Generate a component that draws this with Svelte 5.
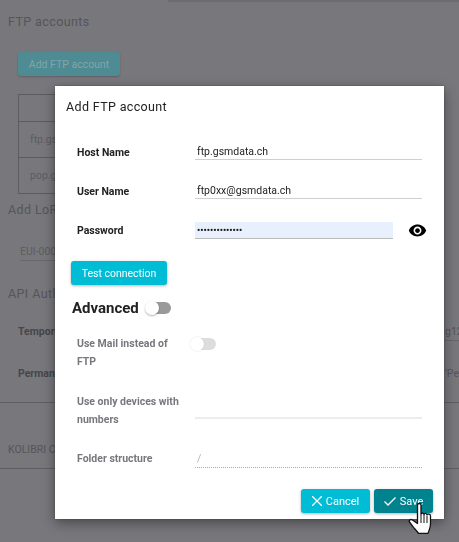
<script>
  let advanced = $state(false);
</script>

<div class="page">
  <div class="topstrip"></div>
  <h2 class="h first">FTP accounts</h2>
  <button class="addbtn">Add FTP account</button>
  <div class="table">
    <div class="tr head"></div>
    <div class="tr">ftp.gsmdata.ch</div>
    <div class="tr">pop.gsmdata.ch</div>
  </div>
  <h2 class="h lora">Add LoRa device</h2>
  <div class="eui">EUI-0000</div>
  <h2 class="h api">API Authentication</h2>
  <div class="keyrow temp"><b>Temporary key</b><span>g12</span></div>
  <div class="keyrow perm"><b>Permanent key</b><span>'Pe</span></div>
  <div class="rule r0"></div>
  <div class="rule r1"></div>
  <div class="kolibri">KOLIBRI Cloud</div>
  <div class="rule r2"></div>
</div>

<div class="dialog">
  <div class="title">Add FTP account</div>

  <div class="formrow host">
    <label for="host">Host Name</label>
    <input id="host" value="ftp.gsmdata.ch" />
  </div>
  <div class="formrow user">
    <label for="user">User Name</label>
    <input id="user" value="ftp0xx@gsmdata.ch" />
  </div>
  <div class="formrow pass">
    <label for="pw">Password</label>
    <input id="pw" class="filled" type="password" value="aaaaaaaaaaaaaa" />
    <svg class="eye" viewBox="0 0 24 24" width="19" height="19"><path d="M12 4.500C7 4.500 2.730 7.610 1 12c1.730 4.390 6 7.500 11 7.500s9.270-3.110 11-7.500c-1.730-4.390-6-7.500-11-7.500zM12 17c-2.760 0-5-2.240-5-5s2.240-5 5-5 5 2.240 5 5-2.240 5-5 5zm0-8c-1.660 0-3 1.340-3 3s1.340 3 3 3 3-1.340 3-3-1.340-3-3-3z"/></svg>
  </div>

  <button class="test">Test connection</button>

  <div class="advanced">
    <span>Advanced</span>
    <div class="toggle dark"><i></i></div>
  </div>

  <div class="formrow mail muted">
    <div class="lbl">Use Mail instead of FTP</div>
    <div class="toggle light"><i></i></div>
  </div>
  <div class="formrow only muted">
    <div class="lbl">Use only devices with numbers</div>
    <div class="line solid"></div>
  </div>
  <div class="formrow folder muted">
    <div class="lbl">Folder structure</div>
    <div class="line dotted">/</div>
  </div>

  <div class="actions">
    <button class="act cancel">
      <svg viewBox="0 0 10 10" width="10" height="10"><path d="M0 0l10 10M10 0L0 10" stroke="#fff" stroke-width="1.300" fill="none"/></svg>
      Cancel
    </button>
    <button class="act save">
      <svg viewBox="0 0 12 9" width="12" height="9"><path d="M.5 4.500l3.500 3.500 7.500-7.500" stroke="#fff" stroke-width="1.300" fill="none"/></svg>
      Save
    </button>
  </div>
</div>

<svg class="hand" viewBox="0 0 26 34" width="26" height="34">
  <path d="M9.500 3c0-2 3.500-2 3.500 0v9.500c.3-2 3-2 3 .2.400-1.800 3-1.600 3 .4.600-1.500 3.500-1.200 3.500.8v8c0 4-1.500 6-2.500 9.500H10.500c-1-2-3-3.500-5-6L1.500 20c-1-1.500 1-3.200 2.500-2.200l5.500 3.700z" fill="#fff" stroke="#111" stroke-width="1.300" stroke-linejoin="round"/>
  <path d="M13 13v8M16 13v8M19 14v7" stroke="#111" stroke-width="1" fill="none"/>
</svg>

<style>
  :global(body) {
    margin: 0;
    background: #78777c;
    font-family: Roboto, "Liberation Sans", sans-serif;
    overflow: hidden;
  }
  .page {
    position: relative;
    width: 459px;
    height: 542px;
    overflow: hidden;
    color: #55555a;
  }
  .page > * { position: absolute; }
  .topstrip { left: 168px; right: 0; top: 0; height: 2px; background: #6c6b70; }
  .h {
    margin: 0;
    left: 8px;
    font-size: 12.500px;
    font-weight: 400;
    letter-spacing: 0.4px;
    line-height: 18px;
    color: #55555a;
  }
  .first { top: 13px; }
  .lora { top: 201px; }
  .api { top: 285px; }
  .addbtn {
    left: 18px;
    top: 52px;
    width: 102px;
    height: 24px;
    border: 0;
    border-radius: 3px;
    background: #4f8b92;
    color: #80a6ab;
    font: 400 10.500px Roboto, sans-serif;
    padding: 0;
    box-shadow: 0 1px 2px rgba(0,0,0,.2);
  }
  .table { left: 18px; top: 94px; width: 200px; border: 1px solid #5c5c60; }
  .tr {
    height: 35px;
    line-height: 35px;
    padding-left: 11px;
    font-size: 10.500px;
    border-top: 1px solid #5c5c60;
    color: #5c5c60;
  }
  .tr.head { height: 26px; border-top: 0; }
  .eui {
    left: 20px;
    top: 244px;
    width: 200px;
    height: 16px;
    font-size: 10.500px;
    line-height: 16px;
    color: #5c5c60;
    border-bottom: 1px solid #68686c;
  }
  .keyrow {
    left: 18px;
    right: 0;
    display: flex;
    justify-content: space-between;
    font-size: 10.500px;
    line-height: 16px;
    color: #46464a;
  }
  .keyrow b { font-weight: 700; }
  .keyrow span { color: #55555a; position: absolute; left: 427px; }
  .temp { top: 324px; }
  .perm { top: 366px; }
  .rule { left: 0; right: 0; height: 1px; background: #5f5f63; }
  .r0 { top: 340px; left: 445px; background: #68686c; }
  .r1 { top: 402px; }
  .r2 { top: 468px; }
  .kolibri { left: 8px; top: 442px; font-size: 10.500px; line-height: 16px; color: #55555a; }

  .dialog {
    position: fixed;
    left: 55px;
    top: 86px;
    width: 389px;
    height: 433px;
    box-sizing: border-box;
    background: #fff;
    box-shadow: 0 4px 12px rgba(0,0,0,.4), 0 0 2px rgba(0,0,0,.3);
    padding: 12px 22px 0 11px;
    display: flex;
    flex-direction: column;
  }
  .title {
    font-size: 12.500px;
    line-height: 17px;
    letter-spacing: 0.35px;
    color: #222;
    margin-bottom: 27px;
  }
  .formrow {
    display: flex;
    align-items: center;
    padding-left: 11px;
    font-size: 10.500px;
    font-weight: 700;
    color: #222;
  }
  .formrow label { width: 118px; flex: none; line-height: 18px; padding-top: 2px; }
  .lbl { width: 105px; flex: none; margin-right: 13px; line-height: 18px; }
  input {
    flex: 1;
    min-width: 0;
    height: 15px;
    box-sizing: content-box;
    padding: 0 2px;
    border: 0;
    border-bottom: 1px solid #cfcfcf;
    outline: 0;
    font: 400 10.500px Roboto, sans-serif;
    color: #222;
    background: transparent;
  }
  .host { height: 20px; margin-bottom: 19px; }
  .user { height: 20px; margin-bottom: 19px; }
  .pass { height: 20px; position: relative; }
  .filled {
    flex: none;
    width: 194px;
    height: 16px;
    background: #e8f0fe;
    border-bottom-color: #bbb;
    font-size: 9px;
    font-weight: 700;
  }
  .eye { position: absolute; right: -5px; top: 1px; }
  .test {
    align-self: flex-start;
    width: 96px;
    height: 24px;
    margin: 21px 0 0 5px;
    border: 0;
    border-radius: 3px;
    background: #00bcd4;
    color: #fff;
    font: 400 10.500px Roboto, sans-serif;
    padding: 0;
    box-shadow: 0 1px 3px rgba(0,0,0,.3);
  }
  .advanced {
    display: flex;
    align-items: center;
    gap: 5px;
    margin: 12px 0 0 6px;
    height: 22px;
    font-size: 15px;
    font-weight: 700;
    color: #222;
  }
  .toggle { position: relative; width: 22px; height: 12px; border-radius: 6px; flex: none; }
  .toggle i {
    position: absolute;
    left: -4px;
    top: -1.500px;
    width: 14px;
    height: 14px;
    border-radius: 50%;
    background: #fff;
    box-shadow: 0 1px 2px rgba(0,0,0,.3);
  }
  .toggle.dark { background: #9a9a9a; margin-left: 5px; }
  .toggle.light { background: #ddd; margin-left: -1px; margin-top: 3px; }
  .toggle.light i { box-shadow: 0 0 2px rgba(0,0,0,.12); }
  .muted { color: #77787d; align-items: flex-start; }
  .mail { margin-top: 16px; height: 36px; }
  .only { margin-top: 22px; height: 36px; }
  .folder { margin-top: 21px; height: 18px; }
  .line { flex: 1; }
  .line.solid { height: 24px; border-bottom: 2px solid #ececec; }
  .line.dotted {
    height: 17px;
    border-bottom: 1px dotted #aaa;
    font-weight: 400;
    color: #b4b4b4;
    padding-left: 2px;
    line-height: 17px;
  }
  .actions {
    position: absolute;
    right: 11px;
    bottom: 6px;
    display: flex;
    gap: 4px;
  }
  .act {
    height: 24px;
    border: 0;
    border-radius: 3px;
    color: #fff;
    font: 400 11px Roboto, sans-serif;
    padding: 0;
    display: flex;
    align-items: center;
    justify-content: center;
    gap: 4px;
    box-shadow: 0 1px 3px rgba(0,0,0,.3);
  }
  .cancel { width: 69px; background: #00bcd4; }
  .save { width: 59px; background: #00838f; }
  .hand { position: fixed; left: 408px; top: 502px; }
</style>
